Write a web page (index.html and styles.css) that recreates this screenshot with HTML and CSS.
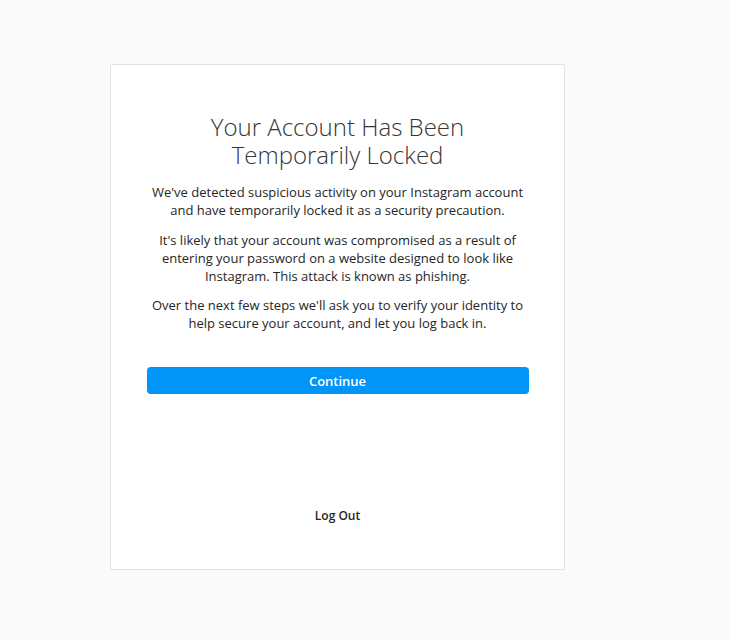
FILE: index.html
```html
<!DOCTYPE html>
<html lang="en">
<head>
<meta charset="utf-8">
<title>Your Account Has Been Temporarily Locked</title>
<link rel="stylesheet" href="styles.css">
</head>
<body>
<main class="card">
  <h1 class="title">Your Account Has Been Temporarily Locked</h1>
  <p class="text">We've detected suspicious activity on your Instagram account and have temporarily locked it as a security precaution.</p>
  <p class="text">It's likely that your account was compromised as a result of entering your password on a website designed to look like Instagram. This attack is known as phishing.</p>
  <p class="text">Over the next few steps we'll ask you to verify your identity to help secure your account, and let you log back in.</p>
  <button class="primary" type="button">Continue</button>
  <button class="link" type="button">Log Out</button>
</main>
</body>
</html>
```
FILE: styles.css
```css
html, body {
  margin: 0;
  padding: 0;
}
body {
  background: #fafafa;
  font-family: "Open Sans", "Noto Sans", sans-serif;
  color: #262626;
  min-height: 640px;
}
.card {
  box-sizing: border-box;
  width: 455px;
  height: 506px;
  margin: 64px 0 0 110px;
  background: #fff;
  border: 1px solid #e3e3e3;
  border-radius: 2px;
  padding: 48px 35px 0;
  display: flex;
  flex-direction: column;
  align-items: center;
}
.title {
  margin: 0 0 14px;
  width: 300px;
  font-size: 24px;
  font-weight: 300;
  line-height: 28px;
  text-align: center;
  color: #363636;
}
.text {
  margin: 0 0 12px;
  font-size: 13px;
  line-height: 18px;
  text-align: center;
  color: #262626;
}
.text + .text + .text {
  margin-top: -1px;
}
.primary {
  margin-top: 23px;
  width: 382px;
  height: 27px;
  border: 0;
  border-radius: 4px;
  background: #0095f6;
  color: #fff;
  font-family: inherit;
  font-size: 13px;
  font-weight: 600;
  cursor: pointer;
}
.link {
  margin-top: 113px;
  border: 0;
  background: none;
  color: #262626;
  font-family: inherit;
  font-size: 12px;
  font-weight: 600;
  padding: 0;
  cursor: pointer;
}
```
